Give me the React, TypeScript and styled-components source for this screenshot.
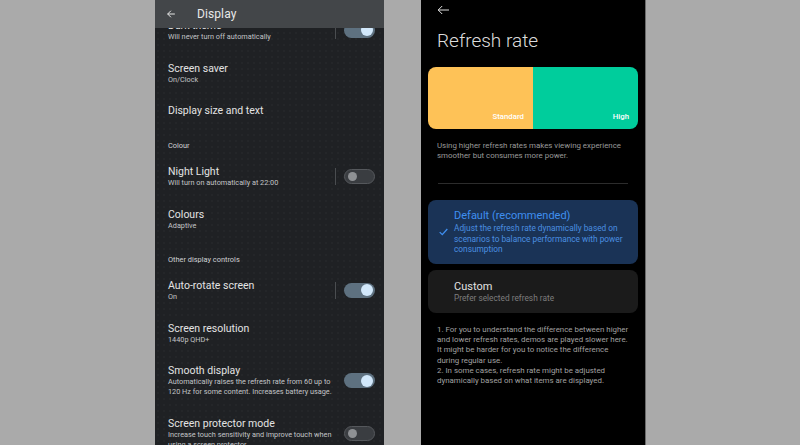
import React from "react";
import styled, { createGlobalStyle } from "styled-components";

const Global = createGlobalStyle`
  html, body { margin: 0; padding: 0; background: #aaaaaa; }
  body { font-family: Roboto, "Noto Sans", sans-serif; -webkit-font-smoothing: antialiased; }
  * { box-sizing: border-box; }
`;

const Stage = styled.div`
  width: 800px;
  height: 445px;
  display: flex;
  padding-left: 155px;
  gap: 37px;
  overflow: hidden;
  background: #aaaaaa;
`;

/* ---------- Left phone ---------- */
const LeftPhone = styled.div`
  width: 229px;
  height: 445px;
  display: flex;
  flex-direction: column;
  background-color: #1f2124;
  background-image: radial-gradient(rgba(255,255,255,0.05) 0.6px, transparent 0.8px);
  background-size: 6px 6px;
  overflow: hidden;
`;

const AppBar = styled.div`
  height: 28px;
  flex: none;
  background: #434649;
  display: flex;
  align-items: center;
  padding-left: 11px;
  gap: 21px;
  position: relative;
  z-index: 1;
  color: #e6e6e6;
`;

const AppTitle = styled.div`
  font-size: 12px;
  color: #e8e8e8;
  letter-spacing: 0.1px;
`;

const Scroll = styled.div`
  flex: 1;
  overflow: hidden;
`;

const ScrollInner = styled.div`
  margin-top: -19px;
  display: flex;
  flex-direction: column;
`;

const Row = styled.div`
  display: flex;
  align-items: center;
  padding: 9.9px 9px 9.9px 13px;
  min-height: 32px;
`;

const RowText = styled.div`
  flex: 1;
  display: flex;
  flex-direction: column;
`;

const RowTitle = styled.div`
  font-size: 10.5px;
  line-height: 13px;
  color: #e3e3e3;
`;

const RowSub = styled.div`
  font-size: 7.3px;
  line-height: 10px;
  color: #c2c4c6;
`;

const SectionLabel = styled.div`
  font-size: 7.4px;
  line-height: 11px;
  color: #d0d2d4;
  padding: 13px 13px 4px;
`;

const VDivider = styled.div`
  width: 1px;
  height: 17px;
  background: #4a4d50;
  margin-right: 8px;
`;

const Track = styled.div<{ $on: boolean }>`
  width: 31px;
  height: 15px;
  border-radius: 8px;
  flex: none;
  background: ${(p) => (p.$on ? "#5e7180" : "#3a3d41")};
  border: ${(p) => (p.$on ? "none" : "1px solid #55585c")};
  display: flex;
  align-items: center;
  justify-content: ${(p) => (p.$on ? "flex-end" : "flex-start")};
  padding: 0 ${(p) => (p.$on ? "2px" : "3px")};
`;

const Thumb = styled.div<{ $on: boolean }>`
  width: ${(p) => (p.$on ? "12px" : "9px")};
  height: ${(p) => (p.$on ? "12px" : "9px")};
  border-radius: 50%;
  background: ${(p) => (p.$on ? "#d2e8fb" : "#8e9194")};
`;

const Toggle = ({ on }: { on: boolean }) => (
  <Track $on={on}>
    <Thumb $on={on} />
  </Track>
);

type Item =
  | { kind: "section"; label: string }
  | { kind: "row"; title: string; sub?: string[]; toggle?: boolean; divider?: boolean };

const items: Item[] = [
  { kind: "row", title: "Dark theme", sub: ["Will never turn off automatically"], toggle: true, divider: true },
  { kind: "row", title: "Screen saver", sub: ["On/Clock"] },
  { kind: "row", title: "Display size and text" },
  { kind: "section", label: "Colour" },
  { kind: "row", title: "Night Light", sub: ["Will turn on automatically at 22:00"], toggle: false, divider: true },
  { kind: "row", title: "Colours", sub: ["Adaptive"] },
  { kind: "section", label: "Other display controls" },
  { kind: "row", title: "Auto-rotate screen", sub: ["On"], toggle: true, divider: true },
  { kind: "row", title: "Screen resolution", sub: ["1440p QHD+"] },
  {
    kind: "row",
    title: "Smooth display",
    sub: ["Automatically raises the refresh rate from 60 up to", "120 Hz for some content. Increases battery usage."],
    toggle: true,
  },
  {
    kind: "row",
    title: "Screen protector mode",
    sub: ["Increase touch sensitivity and improve touch when", "using a screen protector"],
    toggle: false,
  },
];

const BackArrowMaterial = () => (
  <svg width="10" height="10" viewBox="0 0 24 24" fill="none">
    <path d="M20 12H5M11 5l-7 7 7 7" stroke="#e6e6e6" strokeWidth="2.4" strokeLinecap="square" />
  </svg>
);

/* ---------- Right phone ---------- */
const RightPhone = styled.div`
  width: 225px;
  height: 445px;
  background: #000;
  border-right: 1px solid #6a6a6a;
  display: flex;
  flex-direction: column;
  overflow: hidden;
`;

const TopNav = styled.div`
  height: 17px;
  padding: 2px 0 0 16px;
  display: flex;
  align-items: center;
`;

const PageTitle = styled.div`
  font-size: 19px;
  font-weight: 300;
  color: #dcdcdc;
  padding: 12px 16px 0;
  line-height: 24px;
`;

const Demo = styled.div`
  margin: 14px 7px 0;
  height: 62px;
  border-radius: 8px;
  overflow: hidden;
  display: flex;
`;

const DemoHalf = styled.div<{ $color: string }>`
  flex: 1;
  background: ${(p) => p.$color};
  display: flex;
  align-items: flex-end;
  justify-content: flex-end;
  padding: 0 9px 8px 0;
  font-size: 7.8px;
  color: #fff;
  font-weight: 500;
`;

const Para = styled.div`
  padding: 0 16px;
  font-size: 7.9px;
  line-height: 10px;
  color: #9a9a9a;
`;

const Desc = styled(Para)`
  margin-top: 12px;
`;

const HLine = styled.div`
  margin: 22px 17px 16px;
  height: 1px;
  background: #2c2c2c;
`;

const Options = styled.div`
  display: flex;
  flex-direction: column;
  gap: 6px;
  padding: 0 7px;
`;

const Option = styled.div<{ $selected: boolean }>`
  border-radius: 8px;
  background: ${(p) => (p.$selected ? "#1a3356" : "#1b1b1b")};
  display: flex;
  align-items: center;
  padding: ${(p) => (p.$selected ? "9px 12px 9.5px 11px" : "10px 12px 9.5px 11px")};
  gap: 6px;
`;

const CheckSlot = styled.div`
  width: 9px;
  flex: none;
  display: flex;
  align-items: center;
  justify-content: center;
`;

const OptText = styled.div`
  flex: 1;
  display: flex;
  flex-direction: column;
`;

const OptTitle = styled.div<{ $selected: boolean }>`
  font-size: 11px;
  line-height: 13px;
  color: ${(p) => (p.$selected ? "#3f8ff0" : "#e2e2e2")};
`;

const OptSub = styled.div<{ $selected: boolean }>`
  font-size: 8.3px;
  line-height: 10.5px;
  color: ${(p) => (p.$selected ? "#4a8fe0" : "#7d7d7d")};
  margin-top: ${(p) => (p.$selected ? "1px" : "0")};
  white-space: nowrap;
`;

const Notes = styled(Para)`
  margin-top: 12px;
  line-height: 10.2px;
  color: #a0a0a0;
`;

const ThinArrow = () => (
  <svg width="13" height="10" viewBox="0 0 13 10" fill="none">
    <path d="M12 5H1.2M5.2 1L1.2 5l4 4" stroke="#e0e0e0" strokeWidth="1" />
  </svg>
);

const Check = () => (
  <svg width="9" height="8" viewBox="0 0 9 8" fill="none">
    <path d="M0.7 4.1L3.3 6.6 8.3 1" stroke="#3f8ff0" strokeWidth="1.3" />
  </svg>
);

export default function App() {
  return (
    <>
      <Global />
      <Stage>
        <LeftPhone>
          <AppBar>
            <BackArrowMaterial />
            <AppTitle>Display</AppTitle>
          </AppBar>
          <Scroll>
            <ScrollInner>
              {items.map((it, i) =>
                it.kind === "section" ? (
                  <SectionLabel key={i}>{it.label}</SectionLabel>
                ) : (
                  <Row key={i}>
                    <RowText>
                      <RowTitle>{it.title}</RowTitle>
                      {it.sub?.map((s, j) => (
                        <RowSub key={j}>{s}</RowSub>
                      ))}
                    </RowText>
                    {it.divider && <VDivider />}
                    {it.toggle !== undefined && <Toggle on={it.toggle} />}
                  </Row>
                )
              )}
            </ScrollInner>
          </Scroll>
        </LeftPhone>

        <RightPhone>
          <TopNav>
            <ThinArrow />
          </TopNav>
          <PageTitle>Refresh rate</PageTitle>
          <Demo>
            <DemoHalf $color="#fec257">Standard</DemoHalf>
            <DemoHalf $color="#00cd9c">High</DemoHalf>
          </Demo>
          <Desc>
            Using higher refresh rates makes viewing experience
            <br />
            smoother but consumes more power.
          </Desc>
          <HLine />
          <Options>
            <Option $selected>
              <CheckSlot>
                <Check />
              </CheckSlot>
              <OptText>
                <OptTitle $selected>Default (recommended)</OptTitle>
                <OptSub $selected>
                  Adjust the refresh rate dynamically based on
                  <br />
                  scenarios to balance performance with power
                  <br />
                  consumption
                </OptSub>
              </OptText>
            </Option>
            <Option $selected={false}>
              <CheckSlot />
              <OptText>
                <OptTitle $selected={false}>Custom</OptTitle>
                <OptSub $selected={false}>Prefer selected refresh rate</OptSub>
              </OptText>
            </Option>
          </Options>
          <Notes>
            1. For you to understand the difference between higher
            <br />
            and lower refresh rates, demos are played slower here.
            <br />
            It might be harder for you to notice the difference
            <br />
            during regular use.
            <br />
            2. In some cases, refresh rate might be adjusted
            <br />
            dynamically based on what items are displayed.
          </Notes>
        </RightPhone>
      </Stage>
    </>
  );
}
